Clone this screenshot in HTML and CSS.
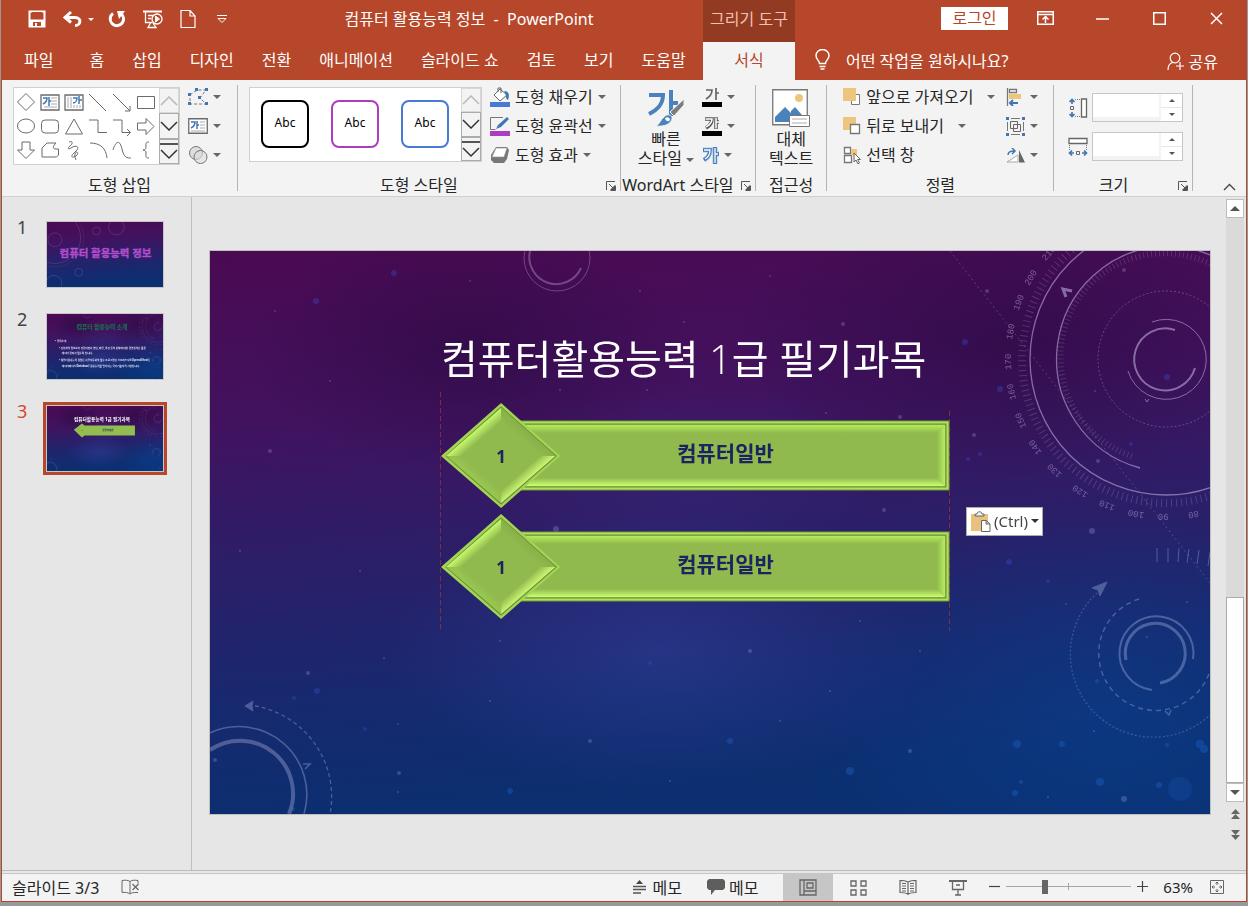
FILE: index.html
```html
<!DOCTYPE html>
<html lang="ko">
<head>
    <meta charset="UTF-8">
    <meta name="viewport" content="width=device-width, initial-scale=1.0">
    <title>컴퓨터 활용능력 정보 - PowerPoint</title>
    <link rel="stylesheet" href="styles.css">
</head>
<body>

<!-- shared drawings -->
<svg class="defs" aria-hidden="true">
    <defs>
        <linearGradient id="sky" x1="0" y1="0" x2="0.12" y2="1">
            <stop offset="0" stop-color="#4a0a52"/>
            <stop offset="0.3" stop-color="#42125f"/>
            <stop offset="0.55" stop-color="#2c1e68"/>
            <stop offset="0.8" stop-color="#17296f"/>
            <stop offset="1" stop-color="#0b2f70"/>
        </linearGradient>
        <radialGradient id="glow"><stop offset="0" stop-color="#3c50b4" stop-opacity="0.32"/><stop offset="1" stop-color="#3c50b4" stop-opacity="0"/></radialGradient>
        <radialGradient id="dark"><stop offset="0" stop-color="#200838" stop-opacity="0.45"/><stop offset="1" stop-color="#200838" stop-opacity="0"/></radialGradient>
        <radialGradient id="blue"><stop offset="0" stop-color="#0a3f8c" stop-opacity="0.6"/><stop offset="1" stop-color="#0a3f8c" stop-opacity="0"/></radialGradient>
        <linearGradient id="edgeTop" x1="0" y1="0" x2="0" y2="1"><stop offset="0" stop-color="#b4ec58"/><stop offset="1" stop-color="#90ba4e"/></linearGradient>
        <linearGradient id="edgeBottom" x1="0" y1="0" x2="0" y2="1"><stop offset="0" stop-color="#90ba4e"/><stop offset="1" stop-color="#ccff70"/></linearGradient>
        <linearGradient id="edgeRight" x1="0" y1="0" x2="1" y2="0"><stop offset="0" stop-color="#90ba4e"/><stop offset="1" stop-color="#b8ee60"/></linearGradient>
        <linearGradient id="facetNW" gradientUnits="userSpaceOnUse" x1="32" y1="29" x2="39" y2="37"><stop offset="0" stop-color="#c8fa6c"/><stop offset="1" stop-color="#90ba4e"/></linearGradient>
        <linearGradient id="facetSE" gradientUnits="userSpaceOnUse" x1="80" y1="69" x2="88" y2="78"><stop offset="0" stop-color="#90ba4e"/><stop offset="1" stop-color="#d6ff78"/></linearGradient>
        <linearGradient id="facetSW" gradientUnits="userSpaceOnUse" x1="32" y1="77" x2="39" y2="69"><stop offset="0" stop-color="#a6d852"/><stop offset="1" stop-color="#90ba4e"/></linearGradient>
        <linearGradient id="facetNE" gradientUnits="userSpaceOnUse" x1="81" y1="37" x2="88" y2="29"><stop offset="0" stop-color="#90ba4e"/><stop offset="1" stop-color="#82ac44"/></linearGradient>
    </defs>

    <symbol id="space" viewBox="0 0 1000 563" preserveAspectRatio="none">
        <rect width="1000" height="563" fill="url(#sky)"/>
        <ellipse cx="260" cy="100" rx="220" ry="120" fill="url(#dark)"/>
        <ellipse cx="800" cy="90" rx="280" ry="140" fill="url(#dark)"/>
        <ellipse cx="450" cy="400" rx="270" ry="140" fill="url(#glow)"/>
        <ellipse cx="480" cy="230" rx="200" ry="100" fill="url(#glow)" opacity="0.4"/>
        <ellipse cx="900" cy="470" rx="320" ry="210" fill="url(#blue)"/>
        <g fill="#3a4ed0" opacity="0.35">
            <circle cx="106" cy="50" r="3"/><circle cx="184" cy="22" r="3"/><circle cx="755" cy="91" r="3"/><circle cx="790" cy="138" r="3"/>
            <circle cx="107" cy="440" r="3"/><circle cx="84" cy="447" r="2"/><circle cx="155" cy="478" r="2"/><circle cx="770" cy="203" r="2"/>
            <circle cx="758" cy="208" r="2"/><circle cx="799" cy="311" r="3"/><circle cx="838" cy="330" r="2"/><circle cx="957" cy="126" r="3"/>
            <circle cx="921" cy="193" r="2"/><circle cx="504" cy="176" r="3"/><circle cx="440" cy="412" r="2"/>
        </g>
        <g fill="#1d62c8" opacity="0.4">
            <circle cx="807" cy="493" r="4"/><circle cx="852" cy="493" r="3"/><circle cx="890" cy="531" r="4"/><circle cx="805" cy="542" r="3"/>
            <circle cx="811" cy="531" r="2"/><circle cx="949" cy="534" r="3"/><circle cx="957" cy="494" r="2"/><circle cx="990" cy="493" r="4"/>
            <circle cx="994" cy="498" r="4"/><circle cx="887" cy="430" r="2"/><circle cx="640" cy="520" r="4"/><circle cx="520" cy="490" r="3"/>
            <circle cx="300" cy="540" r="3"/><circle cx="970" cy="538" r="12" opacity="0.5"/><circle cx="83" cy="558" r="2"/>
        </g>
        <g fill="#cfc6ff" opacity="0.22">
            <circle cx="474" cy="71" r="1"/><circle cx="633" cy="73" r="2"/><circle cx="777" cy="40" r="2"/><circle cx="914" cy="19" r="2"/>
            <circle cx="350" cy="139" r="1"/><circle cx="437" cy="139" r="1"/><circle cx="616" cy="162" r="1"/><circle cx="690" cy="166" r="2"/>
            <circle cx="764" cy="184" r="2"/><circle cx="885" cy="140" r="1"/><circle cx="888" cy="210" r="2"/><circle cx="882" cy="280" r="3"/>
            <circle cx="346" cy="278" r="3"/><circle cx="674" cy="259" r="2"/><circle cx="98" cy="422" r="2"/><circle cx="174" cy="407" r="1"/>
            <circle cx="188" cy="473" r="1"/><circle cx="189" cy="522" r="2"/><circle cx="188" cy="541" r="1"/><circle cx="5" cy="509" r="2"/>
            <circle cx="60" cy="200" r="2"/><circle cx="120" cy="130" r="1"/><circle cx="30" cy="300" r="1"/><circle cx="150" cy="320" r="1"/>
            <circle cx="280" cy="450" r="1"/><circle cx="380" cy="490" r="2"/><circle cx="460" cy="530" r="1"/><circle cx="570" cy="470" r="1"/>
            <circle cx="620" cy="440" r="1"/><circle cx="710" cy="400" r="1"/><circle cx="700" cy="500" r="2"/><circle cx="914" cy="548" r="3"/>
            <circle cx="856" cy="353" r="1"/><circle cx="884" cy="480" r="1"/><circle cx="937" cy="386" r="1"/><circle cx="977" cy="351" r="1"/>
            <circle cx="838" cy="546" r="1"/><circle cx="260" cy="30" r="1"/><circle cx="430" cy="40" r="1"/><circle cx="560" cy="25" r="1"/>
            <circle cx="290" cy="390" r="1"/><circle cx="650" cy="370" r="1"/><circle cx="540" cy="400" r="2"/><circle cx="65" cy="60" r="1"/>
        </g>

        <!-- top ring -->
        <g fill="none" stroke="#c8b4dc" opacity="0.35">
            <circle cx="347" cy="7" r="33"/>
            <path d="M320 0a27 27 0 0 0 51 17" stroke-width="2"/>
        </g>

        <!-- large gauge -->
        <g fill="none" stroke="#c9b9e6" opacity="0.55">
            <circle cx="956" cy="108" r="136" stroke-width="1.3"/>
            <path d="M930 217A113 113 0 0 1 956 -5A113 113 0 0 1 1000 4" stroke-width="1.3"/>
            <circle cx="956" cy="108" r="144" stroke-width="8" stroke-dasharray="1 4" opacity="0.4"/>
            <path d="M922 205A104 104 0 1 1 1040 47" stroke-width="6" stroke-dasharray="1 3" opacity="0.35"/>
            <circle cx="956" cy="108" r="68" stroke-dasharray="2 2" opacity="0.6"/>
            <path d="M965 79A31 31 0 1 0 985 117" stroke-width="2"/>
            <path d="M942 71A40 40 0 1 1 918 120"/>
            <path d="M740 0L1000 332" stroke-dasharray="2 3" opacity="0.5"/>
            <path d="M856 46l-3-8 9 2" stroke-width="3"/>
            <path d="M935 148l2 3 2-3"/>
        </g>
        <g class="gauge-numbers" fill="#c9b9e6" opacity="0.45" text-anchor="middle">
            <text x="956" y="-47" transform="rotate(170 956 108)">80</text>
            <text x="956" y="-47" transform="rotate(181 956 108)">90</text>
            <text x="956" y="-47" transform="rotate(191 956 108)">100</text>
            <text x="956" y="-47" transform="rotate(202 956 108)">110</text>
            <text x="956" y="-47" transform="rotate(213 956 108)">120</text>
            <text x="956" y="-47" transform="rotate(225 956 108)">130</text>
            <text x="956" y="-47" transform="rotate(236 956 108)">140</text>
            <text x="956" y="-47" transform="rotate(247 956 108)">150</text>
            <text x="956" y="-47" transform="rotate(258 956 108)">160</text>
            <text x="956" y="-47" transform="rotate(269 956 108)">170</text>
            <text x="956" y="-47" transform="rotate(280 956 108)">180</text>
            <text x="956" y="-47" transform="rotate(291 956 108)">190</text>
            <text x="956" y="-47" transform="rotate(301 956 108)">200</text>
            <text x="956" y="-47" transform="rotate(312 956 108)">210</text>
        </g>

        <!-- lower right rings -->
        <g fill="none" stroke="#9fb0dc" opacity="0.4">
            <path d="M947 297v14M958 297v14M969 297l-1 14M979 298l-2 14M989 299l-2 14M1000 301l-2 14"/>
            <path d="M942 439A37 37 0 1 1 983 408" stroke-width="2"/>
            <path d="M916 409A30 30 0 1 1 950 432" stroke-width="3"/>
            <path d="M929 348A57 57 0 1 0 1000 420" stroke-width="1.4" stroke-dasharray="5 4"/>
            <path d="M887 342A82 82 0 0 0 1000 464" stroke-width="1.4" stroke-dasharray="2 2" opacity="0.7"/>
            <path d="M882 337l15-6-7 14-2-6z" fill="#9fb0dc"/>
            <path d="M955 460l4 4 2-5" stroke-width="1.4"/>
        </g>

        <!-- lower left rings -->
        <g fill="none" stroke="#b0b0dc" opacity="0.38">
            <path d="M0 499A53 53 0 0 1 79 563" stroke-width="4"/>
            <path d="M0 482A68 68 0 0 1 94 563" stroke-width="1.6"/>
            <path d="M45 455A92 92 0 0 1 120 563" stroke-width="1.3" stroke-dasharray="4 3"/>
            <path d="M35 455l8-5-1 5 1 5z" fill="#b0b0dc"/>
            <path d="M93 513l7 0-5 5" stroke-width="1.5"/>
        </g>
    </symbol>

    <symbol id="arrow-bar" viewBox="0 0 508 106" preserveAspectRatio="none">
        <path d="M60 18H507V87H60z" fill="#b0e25c" stroke="#6f9c32"/>
        <path d="M60 21H504V84H60z" fill="#90ba4e" stroke="#6c8a3c"/>
        <path d="M60 22H503L495 30H60z" fill="url(#edgeTop)"/>
        <path d="M60 75H495L503 83H60z" fill="url(#edgeBottom)"/>
        <path d="M495 30L503 22V83L495 75z" fill="url(#edgeRight)"/>
        <path d="M60 0L119 53L60 105L0 53z" fill="#a2d652"/>
        <path d="M60 4L115 53L60 101L5 53z" fill="#90ba4e" stroke="#6c8a3c"/>
        <path d="M5 53L60 5V18L20 53z" fill="url(#facetNW)"/>
        <path d="M60 5L114 53H100L60 18z" fill="url(#facetNE)" opacity="0.6"/>
        <path d="M114 53L60 100V88L100 53z" fill="url(#facetSE)"/>
        <path d="M5 53H20L60 88V100z" fill="url(#facetSW)" opacity="0.5"/>
    </symbol>

    <symbol id="launcher" viewBox="0 0 10 10"><path d="M.5 9V.5H9M3 3l4 4M9.500 4.500v5h-5" fill="none" stroke="#555"/><path d="M9 4v5H4z" fill="#555"/></symbol>
    <symbol id="scroll-up" viewBox="0 0 18 10"><path d="M1 9l8-8 8 8" fill="none" stroke="#b8b8b8" stroke-width="1.5"/></symbol>
    <symbol id="scroll-down" viewBox="0 0 18 10"><path d="M1 1l8 8 8-8" fill="none" stroke="#333" stroke-width="1.5"/></symbol>
    <symbol id="scroll-more" viewBox="0 0 18 18"><path d="M0 2h18" stroke="#555" stroke-width="2"/><path d="M1 8l8 8 8-8" fill="none" stroke="#333" stroke-width="1.5"/></symbol>
</svg>

<div class="window">
    <header class="header">
        <div class="title-left">
            <nav class="quick-access" aria-label="빠른 실행 도구 모음">
                <button aria-label="저장"><svg width="18" height="18" viewBox="0 0 18 18"><path d="M1.500 1.500h15v15h-15z" fill="none" stroke="#fff" stroke-width="2"/><path d="M4 1h10v8H4z" fill="#b7472a"/><path d="M1 1h16v1H1zM1 9.500h16V17H1z" fill="#fff"/><path d="M5 12h8v4H5z" fill="#b7472a"/><path d="M7 13h2v3H7z" fill="#fff"/></svg></button>
                <button class="undo" aria-label="실행 취소"><svg width="19" height="18" viewBox="0 0 19 18"><path d="M8 2L2 7.500l6 5M2.500 7.500H12c7 0 6 8 0 8" fill="none" stroke="#fff" stroke-width="3"/></svg><span class="caret light"></span></button>
                <button aria-label="다시 실행"><svg width="18" height="18" viewBox="0 0 18 18"><path d="M5 3.500A6.700 6.700 0 1 0 12.500 3.300" fill="none" stroke="#fff" stroke-width="3"/><path d="M9 1h8l-6 8z" fill="#fff"/></svg></button>
                <button aria-label="처음부터 시작"><svg width="20" height="19" viewBox="0 0 20 19" fill="none" stroke="#fff"><path d="M0 1.500h19" stroke-width="2"/><path d="M2.500 2v10.500h7M5 5.500h6M5 8.500h3M8 12l-3 5.500h8L10 13" stroke-width="1.300"/><circle cx="14" cy="9" r="5" fill="#b7472a" stroke-width="1.300"/><path d="M12.500 6l4 3-4 3z" fill="#fff"/></svg></button>
                <button aria-label="새로 만들기"><svg width="16" height="18" viewBox="0 0 16 18"><path d="M1 .5h9l5 5.500v11.500H1zM10 .5V6h5" fill="none" stroke="#fff" stroke-width="1.200"/></svg></button>
                <button class="customize" aria-label="빠른 실행 도구 모음 사용자 지정"><svg width="10" height="8" viewBox="0 0 10 8"><path d="M0 .5h10M1 3.500h8l-4 4z" fill="none" stroke="#fff"/></svg></button>
            </nav>
            <h1 class="doc-title">컴퓨터 활용능력 정보 &nbsp;-&nbsp; PowerPoint</h1>
        </div>
        <div class="context-label">그리기 도구</div>
        <div class="title-right">
            <button class="login">로그인</button>
            <button class="win-button" aria-label="리본 메뉴 표시 옵션"><svg width="17" height="14" viewBox="0 0 17 14"><path d="M.75.75h15.500v12.500H.75zM1 3.500h15" fill="none" stroke="#fff" stroke-width="1.500"/><path d="M8.500 12V6M5.500 8.500l3-3 3 3" fill="none" stroke="#fff" stroke-width="1.500"/></svg></button>
            <button class="win-button" aria-label="최소화"><svg width="13" height="13" viewBox="0 0 13 13"><path d="M0 7h13" stroke="#fff" stroke-width="1.500"/></svg></button>
            <button class="win-button" aria-label="최대화"><svg width="13" height="13" viewBox="0 0 13 13"><path d="M.75.75h11.500v11.500H.75z" fill="none" stroke="#fff" stroke-width="1.500"/></svg></button>
            <button class="win-button" aria-label="닫기"><svg width="13" height="13" viewBox="0 0 13 13"><path d="M1 1l11 11M12 1L1 12" stroke="#fff" stroke-width="1.500"/></svg></button>
        </div>

        <nav class="tabs" aria-label="리본 탭">
            <button class="file-tab">파일</button>
            <button>홈</button>
            <button>삽입</button>
            <button>디자인</button>
            <button>전환</button>
            <button>애니메이션</button>
            <button>슬라이드 쇼</button>
            <button>검토</button>
            <button>보기</button>
            <button>도움말</button>
        </nav>
        <button class="format-tab">서식</button>
        <div class="tabs-right">
            <button class="tell-me"><svg width="15" height="21" viewBox="0 0 15 21"><path d="M4.500 14.500c0-3-3.500-4-3.500-8a6.500 6 0 0 1 13 0c0 4-3.500 5-3.500 8zM4.500 17.500h6M5.500 20h4" fill="none" stroke="#fff" stroke-width="1.500"/></svg>어떤 작업을 원하시나요?</button>
            <button class="share"><svg width="18" height="19" viewBox="0 0 18 19"><circle cx="8" cy="6" r="4.800" fill="none" stroke="#fff" stroke-width="1.200"/><path d="M1 18c0-4 2-7 5-7.500M13 10v8M9 14h8" fill="none" stroke="#fff" stroke-width="1.200"/></svg>공유</button>
        </div>
    </header>

    <div class="ribbon">
        <section class="group insert-group">
            <div class="group-body">
                <div class="gallery">
                    <div class="shape-grid">
                        <button aria-label="다이아몬드"><svg viewBox="0 0 20 20"><path d="M10 1.500l8.500 8.500-8.500 8.500L1.500 10z"/></svg></button>
                        <button aria-label="텍스트 상자"><svg viewBox="0 0 20 20"><path d="M1 3h18v15H1z" stroke-width="1.300"/><path d="M11 6h6M11 9h6M11 12h6M4 15h13" stroke="#aaa"/><path d="M3 6h4c0 3-2 5-4 6M9 5v9M9 9h2" stroke="#3f77b5" stroke-width="1.500"/></svg></button>
                        <button aria-label="세로 텍스트 상자"><svg viewBox="0 0 20 20"><path d="M1 3h18v15H1z" stroke-width="1.300"/><path d="M4 5v11M7 5v11M10 13v3M13 13v3M16 13v3" stroke="#aaa"/><path d="M9 6h4c0 3-2 5-4 5M15 4v8M15 8h3" stroke="#3f77b5" stroke-width="1.500"/></svg></button>
                        <button aria-label="선"><svg viewBox="0 0 20 20"><path d="M1 2l17 17"/></svg></button>
                        <button aria-label="화살표"><svg viewBox="0 0 20 20"><path d="M1 2l17 17M18 14v5h-5"/></svg></button>
                        <button aria-label="직사각형"><svg viewBox="0 0 20 20"><path d="M1.500 4.500h17v12h-17z"/></svg></button>
                        <button aria-label="타원"><svg viewBox="0 0 20 20"><ellipse cx="10" cy="10" rx="8.500" ry="7"/></svg></button>
                        <button aria-label="둥근 직사각형"><svg viewBox="0 0 20 20"><rect x="1.500" y="4" width="17" height="13" rx="3.500"/></svg></button>
                        <button aria-label="삼각형"><svg viewBox="0 0 20 20"><path d="M10 3l8.500 15h-17z"/></svg></button>
                        <button aria-label="꺾인 연결선"><svg viewBox="0 0 20 20"><path d="M1 4h9v12.500h9"/></svg></button>
                        <button aria-label="꺾인 화살표 연결선"><svg viewBox="0 0 20 20"><path d="M1 4h9v12.500h8M15 13l3.500 3.500L15 20"/></svg></button>
                        <button aria-label="오른쪽 화살표"><svg viewBox="0 0 20 20"><path d="M1.500 7H10V2.500l8 8-8 8V14H1.500z"/></svg></button>
                        <button aria-label="아래쪽 화살표"><svg viewBox="0 0 20 20"><path d="M6 2h8v8h4.500L10 18.500 1.500 10H6z"/></svg></button>
                        <button aria-label="자유형"><svg viewBox="0 0 20 20"><path d="M2 17V8l5-5h9c-3 3-4 6 0 6h2.500v6l-2 2z"/></svg></button>
                        <button aria-label="자유 곡선"><svg viewBox="0 0 20 20"><path d="M5 2c5-2 3 3 1 4-3 2-2 4 1 2 4-3 9-2 6 2l-4 4c-3 3 0 4 3 2 4-3 0-6-1-2-1 3 1 5 1 6"/></svg></button>
                        <button aria-label="원호"><svg viewBox="0 0 20 20"><path d="M2 3c10 0 16 5 17 15"/></svg></button>
                        <button aria-label="곡선"><svg viewBox="0 0 20 20"><path d="M1 10C4 0 8 0 10 9s5 9 9 9"/></svg></button>
                        <button aria-label="왼쪽 중괄호"><svg viewBox="0 0 20 20"><path d="M13 2c-4 0-3 2-3 5 0 2-1 3-3 3 2 0 3 1 3 3 0 3-1 5 3 5"/></svg></button>
                    </div>
                    <div class="gallery-scroll">
                        <button class="off" aria-label="위로"><svg width="18" height="10"><use href="#scroll-up"/></svg></button>
                        <button aria-label="아래로"><svg width="18" height="10"><use href="#scroll-down"/></svg></button>
                        <button aria-label="자세히"><svg width="18" height="18"><use href="#scroll-more"/></svg></button>
                    </div>
                </div>
                <div class="rows">
                    <button class="tool" aria-label="도형 편집"><svg width="20" height="18" viewBox="0 0 20 18"><path d="M2 7l7-5h9l-6 8 6 6H2z" fill="none" stroke="#777" stroke-dasharray="3 2"/><path d="M0 5h3v3H0zM7 0h3v3H7zM17 0h3v3h-3zM10 8h3v3h-3zM0 14h3v3H0zM17 14h3v3h-3z" fill="#3f77b5"/></svg><span class="caret"></span></button>
                    <button class="tool" aria-label="텍스트 상자 그리기"><svg width="20" height="16" viewBox="0 0 20 16"><path d="M.75.75h18.500v14.500H.75z" fill="#fff" stroke="#6b6b6b" stroke-width="1.300"/><path d="M12 4h5M12 7h5M12 10h5M3 13h14" stroke="#aaa"/><path d="M3 4h4c0 3-2 5-4 6M9 3v8M9 7h2" fill="none" stroke="#3f77b5" stroke-width="1.500"/></svg><span class="caret"></span></button>
                    <button class="tool" aria-label="도형 병합"><svg width="20" height="20" viewBox="0 0 20 20"><circle cx="8" cy="8" r="6.500" fill="#ddd" stroke="#777"/><circle cx="12.500" cy="12" r="6.500" fill="#ddd" fill-opacity=".6" stroke="#777"/></svg><span class="caret"></span></button>
                </div>
            </div>
            <div class="group-foot"><h2>도형 삽입</h2></div>
        </section>

        <section class="group style-group">
            <div class="group-body">
                <div class="gallery">
                    <div class="swatches">
                        <button class="swatch black">Abc</button>
                        <button class="swatch purple">Abc</button>
                        <button class="swatch blue">Abc</button>
                    </div>
                    <div class="gallery-scroll">
                        <button class="off" aria-label="위로"><svg width="18" height="10"><use href="#scroll-up"/></svg></button>
                        <button aria-label="아래로"><svg width="18" height="10"><use href="#scroll-down"/></svg></button>
                        <button aria-label="자세히"><svg width="18" height="18"><use href="#scroll-more"/></svg></button>
                    </div>
                </div>
                <div class="rows">
                    <button class="tool"><svg width="20" height="20" viewBox="0 0 20 20"><path d="M10 2l7 6-7 6-6-6zM8 5V1h3v5" fill="#fff" stroke="#666"/><path d="M14 4c5 0 6 4 4 9-3-1-1-5-4-9z" fill="#3f77b5"/><path d="M0 15h20v5H0z" fill="#487ad5"/></svg>도형 채우기<span class="caret"></span></button>
                    <button class="tool"><svg width="20" height="20" viewBox="0 0 20 20"><path d="M13 1.500H.5v12h5" fill="none" stroke="#777"/><path d="M6 13l2-4 9-8 2 2-8 8z" fill="#3f77b5"/><path d="M0 15h20v5H0z" fill="#ae3cc3"/></svg>도형 윤곽선<span class="caret"></span></button>
                    <button class="tool"><svg width="20" height="18" viewBox="0 0 20 18"><path d="M6 1h11l2 3-2 9-3 4H4l-3-3V9z" fill="#777"/><path d="M6 2h11l-3 9H2z" fill="#fff" stroke="#999" stroke-width=".7"/></svg>도형 효과<span class="caret"></span></button>
                </div>
            </div>
            <div class="group-foot"><h2>도형 스타일</h2><button class="launcher" aria-label="도형 서식"><svg width="10" height="10"><use href="#launcher"/></svg></button></div>
        </section>

        <section class="group wordart-group">
            <div class="group-body">
                <button class="big-tool">
                    <svg width="38" height="38" viewBox="0 0 38 38"><path d="M2 6h14c0 10-6 15-14 19M24 1v26M24 14h7" fill="none" stroke="#4a82bd" stroke-width="4"/><path d="M37 10v6L27 27l-4-4z" fill="#7d7d7d" stroke="#f3f3f3"/><path d="M17 28c3-4 9-2 8 2-1 5-8 8-16 7 4-2 4-6 8-9z" fill="#4a82bd" stroke="#f3f3f3"/><path d="M18 29c3-2 5 0 5 2-2 3-5 0-5-2z" fill="#fff"/></svg>
                    <span>빠른<br>스타일 <span class="caret"></span></span>
                </button>
                <div class="rows">
                    <button class="tool" aria-label="텍스트 채우기"><svg width="20" height="20" viewBox="0 0 20 20"><path d="M4 3h6c0 5-3 7-6 9M14 1v12M14 6h3" fill="none" stroke="#666" stroke-width="1.700"/><path d="M0 15h20v5H0z"/></svg><span class="caret"></span></button>
                    <button class="tool" aria-label="텍스트 윤곽선"><svg width="20" height="20" viewBox="0 0 20 20"><path d="M3 3h7c0 5-3 7-6 9M14 1v12M14 6h3" fill="none" stroke="#555" stroke-width="3.500"/><path d="M3.500 3H10c0 5-3 6-6 8M14 1.500v11M14 6h3" fill="none" stroke="#fff" stroke-width="1.500"/><path d="M0 15h20v5H0z"/></svg><span class="caret"></span></button>
                    <button class="tool" aria-label="텍스트 효과"><svg width="17" height="19" viewBox="0 0 17 19"><path d="M1 4h7c0 6-3 8-6 10M13 1v17M13 8h4" fill="none" stroke="#a9c9ea" stroke-width="5"/><path d="M1 4h7c0 6-3 8-6 10M13 1v17M13 8h4" fill="none" stroke="#3f77b5" stroke-width="3.500"/><path d="M2 4h6c0 6-3 8-5 9M13 2v15M13 8h3" fill="none" stroke="#fff" stroke-width="1.300"/></svg><span class="caret"></span></button>
                </div>
            </div>
            <div class="group-foot"><h2>WordArt 스타일</h2><button class="launcher" aria-label="텍스트 효과 서식"><svg width="10" height="10"><use href="#launcher"/></svg></button></div>
        </section>

        <section class="group alt-group">
            <div class="group-body">
                <button class="big-tool">
                    <svg width="38" height="38" viewBox="0 0 38 38"><path d="M.75.75h34.500v35H.75z" fill="#fff" stroke="#777" stroke-width="1.300"/><circle cx="27" cy="9" r="4" fill="#edc57d"/><path d="M3 33V28l10-10 10 10v5zM19 22l4-4 7 8v7H19z" fill="#4a82bd"/><path d="M17.500 26.500h20v11h-20z" fill="#fff" stroke="#777"/><path d="M20 30h15M20 34h15" stroke="#aaa"/></svg>
                    <span>대체<br>텍스트</span>
                </button>
            </div>
            <div class="group-foot"><h2>접근성</h2></div>
        </section>

        <section class="group arrange-group">
            <div class="group-body">
                <div class="rows wide">
                    <button class="tool"><svg width="18" height="18" viewBox="0 0 18 18"><path d="M8.500 6.500h8v10h-8z" fill="#fff" stroke="#777"/><path d="M0 0h13v13H0z" fill="#edc57d"/></svg>앞으로 가져오기<span class="caret"></span></button>
                    <button class="tool"><svg width="18" height="18" viewBox="0 0 18 18"><path d="M0 0h13v13H0z" fill="#edc57d"/><path d="M7.500 7.500h9v9h-9z" fill="#fff" stroke="#777" stroke-width="1.300"/></svg>뒤로 보내기<span class="caret"></span></button>
                    <button class="tool"><svg width="18" height="18" viewBox="0 0 18 18"><path d="M1.500 1.500h6v6h-6zM1.500 9.500h7v7h-7z" fill="#fff" stroke="#777" stroke-width="1.300"/><path d="M8 3h6v6H8z" fill="#edc57d"/><path d="M11 7v9l2-2 2 4 1.500-1-2-3.500h3z" fill="#fff" stroke="#666"/></svg>선택 창</button>
                </div>
                <div class="rows">
                    <button class="tool" aria-label="맞춤"><svg width="19" height="18" viewBox="0 0 19 18"><path d="M1.500 0v18M3.500 1.500h7v3h-7z" fill="#fff" stroke="#777" stroke-width="1.300"/><path d="M3 6h12v5H3z" fill="#edc57d"/><path d="M4 15h8M7 12l-3 3 3 3" fill="none" stroke="#3f77b5" stroke-width="2"/></svg><span class="caret"></span></button>
                    <button class="tool" aria-label="그룹화"><svg width="19" height="19" viewBox="0 0 19 19"><path d="M1.500 5v9M17.500 5v9M5 1.500h9M5 17.500h9" fill="none" stroke="#777"/><path d="M4.500 4.500h7v7h-7zM7.500 7.500h7v7h-7z" fill="none" stroke="#666"/><path d="M0 0h3v3H0zM16 0h3v3h-3zM0 16h3v3H0zM16 16h3v3h-3z" fill="#3f77b5"/></svg><span class="caret"></span></button>
                    <button class="tool" aria-label="회전"><svg width="19" height="15" viewBox="0 0 19 15"><path d="M12 7v7H1z" fill="#fff" stroke="#aaa"/><path d="M13 2l6 12.500h-6z" fill="#666"/><path d="M2 7c0-3 2-4 6-4M6 0l3 3-3 3" fill="none" stroke="#3f77b5" stroke-width="1.500"/></svg><span class="caret"></span></button>
                </div>
            </div>
            <div class="group-foot"><h2>정렬</h2></div>
        </section>

        <section class="group size-group">
            <div class="group-body fields">
                <div class="field">
                    <label for="shape-height" aria-label="도형 높이"><svg width="20" height="20" viewBox="0 0 20 20"><path d="M13.500 1h5v18h-5z" fill="#fff" stroke="#666" stroke-width="1.300"/><path d="M7 1.500h5M7 18.500h5" stroke="#777" stroke-dasharray="1 1"/><path d="M4 1v5M1.500 4L4 1.500 6.500 4M4 19v-5M1.500 16L4 18.500 6.500 16" fill="none" stroke="#3f77b5" stroke-width="1.700"/><path d="M2.500 8.500h3v3h-3z" fill="none" stroke="#666"/></svg></label>
                    <div class="spin"><input id="shape-height" type="text"><div class="steps"><button aria-label="높이 늘리기"><span class="up"></span></button><button aria-label="높이 줄이기"><span class="down"></span></button></div></div>
                </div>
                <div class="field">
                    <label for="shape-width" aria-label="도형 너비"><svg width="20" height="20" viewBox="0 0 20 20"><path d="M1 1.500h18v5H1z" fill="#fff" stroke="#666" stroke-width="1.300"/><path d="M1.500 8v5M18.500 8v5" stroke="#777" stroke-dasharray="1 1"/><path d="M1 16h5M4 13.500L1.500 16 4 18.500M19 16h-5M16 13.500l2.500 2.500-2.500 2.500" fill="none" stroke="#3f77b5" stroke-width="1.700"/><path d="M8.500 14.500h3v3h-3z" fill="none" stroke="#666"/></svg></label>
                    <div class="spin"><input id="shape-width" type="text"><div class="steps"><button aria-label="너비 늘리기"><span class="up"></span></button><button aria-label="너비 줄이기"><span class="down"></span></button></div></div>
                </div>
            </div>
            <div class="group-foot"><h2>크기</h2><button class="launcher" aria-label="크기 및 위치"><svg width="10" height="10"><use href="#launcher"/></svg></button></div>
        </section>

        <button class="collapse" aria-label="리본 메뉴 축소"><svg width="13" height="8" viewBox="0 0 13 8"><path d="M1 7l5.500-5.500L12 7" fill="none" stroke="#444" stroke-width="1.300"/></svg></button>
    </div>

    <main class="workspace">
        <ol class="thumbs">
            <li>
                <span class="thumb-number">1</span>
                <svg class="thumb" viewBox="0 0 1000 563" preserveAspectRatio="none">
                    <rect width="1000" height="563" fill="url(#sky)"/>
                    <g fill="none" stroke="#c0b0e0" opacity="0.25" stroke-width="6"><circle cx="68" cy="154" r="60"/><circle cx="68" cy="137" r="222"/><circle cx="68" cy="137" r="250" stroke-dasharray="9 9"/><circle cx="598" cy="43" r="68"/><circle cx="427" cy="77" r="34"/><circle cx="274" cy="436" r="34"/><circle cx="60" cy="530" r="68"/></g>
                    <text class="thumb-cover" x="504" y="300">컴퓨터 활용능력 정보</text>
                </svg>
            </li>
            <li>
                <span class="thumb-number">2</span>
                <svg class="thumb" viewBox="0 0 1000 563" preserveAspectRatio="none">
                    <use href="#space" width="1000" height="563"/>
                    <text class="thumb-green" x="474" y="126">컴퓨터 활용능력 소개</text>
                    <g class="thumb-body">
                        <text x="66" y="240">•&#160;&#160;종목소개</text>
                        <text x="104" y="299">•&#160;산업계의 정보화가 진전되면서 영업, 재무, 생산 등의 분야에 대한 경영분석은 물론</text>
                        <text x="128" y="347">데이터 관리가 필수적 입니다.</text>
                        <text x="104" y="409">•&#160;컴퓨터활용능력 검정은 사무자동화의 필수 프로그램인 스프레드시트(SpreadSheet),</text>
                        <text x="128" y="456">데이터베이스(Database) 활용능력을 평가하는 국가기술자격 시험입니다.</text>
                    </g>
                </svg>
            </li>
            <li class="current">
                <span class="thumb-number">3</span>
                <svg class="thumb" viewBox="0 0 1000 563" preserveAspectRatio="none">
                    <use href="#space" width="1000" height="563"/>
                    <text class="thumb-title" x="474" y="126">컴퓨터활용능력 1급 필기과목</text>
                    <path d="M231 205l70-53 24 17h433v86H325l-24 17z" fill="#93bd4f"/>
                    <text class="thumb-bar" x="524" y="218">컴퓨터일반</text>
                    <text class="thumb-bar" x="301" y="218">1</text>
                </svg>
            </li>
        </ol>

        <div class="editor">
            <div class="slide">
                <svg class="slide-back" viewBox="0 0 1000 563" preserveAspectRatio="none"><use href="#space" width="1000" height="563"/><path d="M230.500 141V380M739.500 160V380" stroke="#a8342a" stroke-dasharray="5 3" opacity=".7"/></svg>
                <div class="slide-content">
                    <h2 class="slide-title">컴퓨터활용능력 <span class="thin">1</span>급 필기과목</h2>
                    <div class="bar-row">
                        <svg class="bar-shape" viewBox="0 0 508 106" preserveAspectRatio="none"><use href="#arrow-bar" width="508" height="106"/></svg>
                        <span class="bar-number">1</span>
                        <span class="bar-text">컴퓨터일반</span>
                    </div>
                    <div class="bar-row">
                        <svg class="bar-shape" viewBox="0 0 508 106" preserveAspectRatio="none"><use href="#arrow-bar" width="508" height="106"/></svg>
                        <span class="bar-number">1</span>
                        <span class="bar-text">컴퓨터일반</span>
                    </div>
                </div>
                <button class="paste-options"><svg width="20" height="21" viewBox="0 0 20 21"><path d="M0 3h17v17H0z" fill="#e9c17e"/><path d="M4 5V3h2c0-3 5-3 5 0h2v2z" fill="#f3f3f3" stroke="#666"/><path d="M10.500 9.500h5l3.500 3.500v7.500h-8.500zM15 9.500V13h4" fill="#fff" stroke="#666"/></svg>(Ctrl)<span class="caret dark"></span></button>
            </div>
        </div>

        <div class="scrollbar">
            <button class="scroll-button" aria-label="위로 스크롤"><span class="up"></span></button>
            <div class="track"><div class="scroll-thumb"></div></div>
            <button class="scroll-button" aria-label="아래로 스크롤"><span class="down"></span></button>
            <button class="page-button" aria-label="이전 슬라이드"><svg width="9" height="11" viewBox="0 0 9 11"><path d="M4.500 0L9 5H0zM4.500 5L9 10H0z" fill="#666"/></svg></button>
            <button class="page-button" aria-label="다음 슬라이드"><svg width="9" height="11" viewBox="0 0 9 11"><path d="M4.500 6L9 1H0zM4.500 11L9 6H0z" fill="#666"/></svg></button>
        </div>
    </main>

    <footer class="status">
        <span class="slide-count">슬라이드 3/3</span>
        <button class="spell" aria-label="맞춤법 검사"><svg width="19" height="16" viewBox="0 0 19 16"><path d="M9 2.500v12M9 2.500C7 1 4 1 1 1.500v12c3-.5 6 0 8 1.500 2-1.500 3-1.500 7-1.500h1M9 2.500C11 1 13 1 17 1.500v3" fill="none" stroke="#666"/><path d="M11.500 5l6 6M17.500 5l-6 6" stroke="#666" stroke-width="1.300"/></svg></button>
        <button class="note"><svg width="13" height="14" viewBox="0 0 13 14"><path d="M6.500 0L10 4H3z" fill="#444"/><path d="M0 6.500h13M0 9.500h13M0 13h8" stroke="#555" stroke-width="1.300"/></svg>메모</button>
        <button class="comment"><svg width="18" height="16" viewBox="0 0 18 16"><path d="M2 0h14l2 2v7l-2 2H8l-4 5v-5H2L0 9V2z" fill="#5e5e5e"/></svg>메모</button>
        <div class="views">
            <button class="active" aria-label="기본"><svg width="18" height="17" viewBox="0 0 18 17"><path d="M1 1h16v15H1zM5 1v15M5 12h12M8 4h6v5H8z" fill="none" stroke="#666" stroke-width="1.300"/></svg></button>
            <button aria-label="여러 슬라이드"><svg width="17" height="16" viewBox="0 0 17 16"><path d="M1 1h5v5H1zM11 1h5v5h-5zM1 10h5v5H1zM11 10h5v5h-5z" fill="none" stroke="#666" stroke-width="1.300"/></svg></button>
            <button aria-label="읽기용 보기"><svg width="18" height="15" viewBox="0 0 18 15"><path d="M9 2C7 1 4 .5 1 .5v12c3 0 6 .5 8 1.500 2-1 5-1.500 8-1.500V.5C14 .5 11 1 9 2zM9 2v13M3 3.500h4M3 6h4M3 8.500h4M3 11h4M11 3.500h4M11 6h4M11 8.500h4M11 11h4" fill="none" stroke="#666" stroke-width="1.200"/></svg></button>
            <button aria-label="슬라이드 쇼"><svg width="18" height="16" viewBox="0 0 18 16"><path d="M0 1h18" stroke="#666" stroke-width="2"/><path d="M3.500 2v7.500h11V2M7 5h4M9 10v5M6 15h6" fill="none" stroke="#666" stroke-width="1.300"/></svg></button>
        </div>
        <button class="zoom-step" aria-label="축소"><svg width="11" height="11" viewBox="0 0 11 11"><path d="M0 5.500h11" stroke="#444" stroke-width="1.200"/></svg></button>
        <input class="zoom" type="range" min="0" max="100" value="30" aria-label="확대/축소">
        <button class="zoom-step" aria-label="확대"><svg width="11" height="11" viewBox="0 0 11 11"><path d="M0 5.500h11M5.500 0v11" stroke="#444" stroke-width="1.200"/></svg></button>
        <button class="percent">63%</button>
        <button class="fit" aria-label="창에 맞춤"><svg width="14" height="14" viewBox="0 0 14 14"><path d="M.5.5h13v13H.5zM7 2v3M7 9v3M2 7h3M9 7h3M5.500 3.500L7 2l1.500 1.500M5.500 10.500L7 12l1.500-1.500M3.500 5.500L2 7l1.500 1.500M10.500 5.500L12 7l-1.500 1.500" fill="none" stroke="#666"/></svg></button>
    </footer>
</div>

</body>
</html>
```
FILE: styles.css
```css
* {
    box-sizing: border-box;
}
body {
    margin: 0;
    height: 100vh;
    padding: 0 1px 4px;
    background-color: #999999;
    color: #262626;
    font-family: "Noto Sans", "Noto Sans CJK KR", sans-serif;
    font-size: 16px;
    overflow: hidden;
}
button {
    border: none;
    padding: 0;
    background: none;
    color: inherit;
    font: inherit;
    white-space: nowrap;
}
svg {
    display: block;
    flex: none;
}
h1, h2 {
    margin: 0;
    font-size: 16px;
    font-weight: 400;
}
.defs {
    position: absolute;
    width: 0;
    height: 0;
}
.window {
    height: 100%;
    display: flex;
    flex-direction: column;
    border: 1px solid #b7472a;
    border-top: none;
    background-color: #e6e6e6;
}
.caret {
    display: inline-block;
    border: 4px solid transparent;
    border-top-color: #666666;
    border-bottom: none;
    vertical-align: middle;
}
.caret.light {
    border-width: 3px;
    border-top-color: #ffffff;
    border-bottom: none;
}
.caret.dark {
    border-top-color: #333333;
}
.up, .down {
    border: 3px solid transparent;
}
.up {
    border-bottom-color: #555555;
    border-top: none;
}
.down {
    border-top-color: #555555;
    border-bottom: none;
}

/* Header */
.header {
    display: grid;
    grid-template-columns: 701px 92px 1fr;
    grid-template-rows: 42px 38px;
    background-color: #b7472a;
    color: #ffffff;
}
.title-left {
    display: flex;
    align-items: center;
    padding-bottom: 4px;
}
.quick-access {
    display: flex;
    align-items: center;
    gap: 17px;
    padding-left: 26px;
}
.undo {
    display: flex;
    align-items: center;
    gap: 6px;
}
.undo .caret {
    margin-right: -3px;
}
.customize {
    padding-left: 4px;
}
.doc-title {
    flex: 1;
    padding: 0 0 2px 8px;
    text-align: center;
    font-size: 16px;
}
.context-label {
    background-color: #933a22;
    color: #f5c1b0;
    text-align: center;
    line-height: 38px;
    white-space: nowrap;
}
.title-right {
    display: flex;
    align-items: center;
    justify-content: flex-end;
    padding: 0 1px 6px 0;
}
.login {
    width: 67px;
    height: 23px;
    margin-right: 9px;
    background-color: #ffffff;
    color: #b7472a;
    line-height: 20px;
}
.win-button {
    width: 57px;
    height: 36px;
    display: flex;
    align-items: center;
    justify-content: center;
}
.tabs {
    display: flex;
}
.tabs button {
    padding: 0 14px 4px;
}
.tabs .file-tab {
    padding-left: 22px;
    margin-right: 8px;
}
.format-tab {
    padding-bottom: 4px;
    background-color: #f3f3f3;
    color: #b7472a;
}
.tabs-right {
    display: flex;
    justify-content: space-between;
    padding: 0 28px 0 20px;
}
.tell-me, .share {
    display: flex;
    align-items: center;
    gap: 16px;
    padding-bottom: 3px;
}
.share {
    gap: 4px;
    padding-bottom: 0;
}

/* Ribbon */
.ribbon {
    display: flex;
    height: 117px;
    padding: 5px 0;
    background-color: #f3f3f3;
    border-bottom: 1px solid #cfcfcf;
}
.group {
    display: flex;
    flex-direction: column;
    border-right: 1px solid #b4b4b4;
}
.group-body {
    flex: 1;
    display: flex;
    align-items: flex-start;
    gap: 8px;
}
.group-foot {
    display: flex;
    height: 16px;
}
.group-foot h2 {
    flex: 1;
    text-align: center;
    line-height: 20px;
    white-space: nowrap;
}
.launcher {
    padding: 6px 4px 0 6px;
}
.insert-group .group-body {
    padding: 0 16px 0 11px;
}
.style-group .group-body {
    padding: 0 14px 0 11px;
}
.wordart-group .group-body {
    padding: 0 20px 0 17px;
}
.alt-group .group-body {
    padding: 0 13px;
}
.arrange-group .group-body {
    padding: 0 15px 0 16px;
    gap: 11px;
}
.gallery {
    display: flex;
    margin-top: 2px;
    background-color: #ffffff;
    border: 1px solid #d0d0d0;
}
.shape-grid {
    display: grid;
    grid-template-columns: repeat(6, 24px);
    grid-template-rows: repeat(3, 24px);
    padding: 2px 1px 2px 0;
}
.shape-grid button {
    display: flex;
    align-items: center;
    justify-content: center;
}
.shape-grid svg {
    width: 20px;
    height: 20px;
    fill: none;
    stroke: #6b6b6b;
}
.gallery-scroll {
    width: 20px;
    display: flex;
    flex-direction: column;
}
.gallery-scroll button {
    flex: 1;
    display: flex;
    align-items: center;
    justify-content: center;
    background-color: #f3f3f3;
    border: 1px solid #ababab;
}
.gallery-scroll .off {
    border-color: #d8d8d8;
}
.swatches {
    display: flex;
    gap: 22px;
    padding: 12px 12px 13px 11px;
}
.swatch {
    width: 48px;
    height: 48px;
    padding-bottom: 3px;
    border: 2px solid #000000;
    border-radius: 8px;
    color: #000000;
    font-size: 12px;
}
.swatch.purple {
    border-color: #ae3cc3;
}
.swatch.blue {
    border-color: #487ad5;
}
.rows {
    display: flex;
    flex-direction: column;
    gap: 5px;
}
.tool {
    display: flex;
    align-items: center;
    gap: 5px;
    height: 24px;
    line-height: 24px;
}
.wide .caret {
    margin-left: 9px;
}
.big-tool {
    display: flex;
    flex-direction: column;
    align-items: center;
    min-width: 44px;
    padding-top: 4px;
    line-height: 19px;
}
.big-tool svg {
    margin-bottom: 3px;
}
.size-group .fields {
    flex-direction: column;
    gap: 10px;
    padding: 8px 9px 0 14px;
}
.field {
    display: flex;
    align-items: center;
    gap: 4px;
}
.spin {
    display: flex;
    width: 91px;
    height: 29px;
    background-color: #ffffff;
    border: 1px solid #c6c6c6;
}
.spin input {
    flex: 1;
    min-width: 0;
    border: 1px solid #f3f3f3;
    border-width: 0 2px 4px 0;
    background-color: #ffffff;
    font: inherit;
}
.steps {
    width: 21px;
    display: flex;
    flex-direction: column;
}
.steps button {
    flex: 1;
    display: flex;
    align-items: center;
    justify-content: center;
}
.steps button + button {
    border-top: 1px solid #e6e6e6;
}
.collapse {
    align-self: flex-end;
    margin: 0 10px 0 auto;
}

/* Workspace */
.workspace {
    flex: 1;
    min-height: 0;
    display: flex;
    border-bottom: 1px solid #bdbdbd;
}
.thumbs {
    width: 190px;
    margin: 0;
    padding: 21px 0 0 15px;
    list-style: none;
    border-right: 1px solid #bfbfbf;
}
.thumbs li {
    display: flex;
    height: 92px;
}
.thumb-number {
    width: 26px;
    font-size: 18px;
    line-height: 19px;
    color: #444444;
}
.thumb {
    width: 118px;
    height: 67px;
    margin: 3px;
    border: 1px solid #c6c6c6;
}
.current .thumb-number {
    color: #d04727;
}
.current .thumb {
    outline: 3px solid #b7472a;
}
.thumb text {
    text-anchor: middle;
    font-weight: 700;
}
.thumb .thumb-cover {
    font-size: 90px;
    fill: #b44ccc;
    stroke: #b44ccc;
    stroke-width: 3px;
}
.thumb .thumb-green {
    font-size: 50px;
    fill: #1c6a50;
    stroke: #1c6a50;
    stroke-width: 2px;
}
.thumb .thumb-body text {
    text-anchor: start;
    font-size: 22px;
    fill: #e4e0f4;
}
.thumb .thumb-title {
    font-size: 40px;
    fill: #ffffff;
}
.thumb .thumb-bar {
    font-size: 21px;
    fill: #1b2360;
}
.gauge-numbers {
    font-family: "Liberation Mono", monospace;
    font-size: 9px;
}
.editor {
    flex: 1;
    display: flex;
    align-items: center;
    padding: 0 15px 2px 17px;
}
.slide {
    position: relative;
    width: 100%;
    aspect-ratio: 1002 / 565;
    border: 1px solid #bfbfbf;
}
.slide-back {
    position: absolute;
    width: 100%;
    height: 100%;
}
.slide-content {
    position: relative;
    width: 74%;
    padding: 78px 0 0 231px;
}
.slide-title {
    margin-bottom: 14px;
    color: #ffffff;
    font-size: 40px;
    line-height: 60px;
    white-space: nowrap;
}
.slide-title .thin {
    font-family: "Open Sans", sans-serif;
    font-weight: 300;
}
.bar-row {
    position: relative;
    display: flex;
    align-items: center;
    height: 106px;
    margin-bottom: 5px;
    color: #1b2360;
    font-weight: 700;
}
.bar-shape {
    position: absolute;
    width: 100%;
    height: 100%;
}
.bar-number, .bar-text {
    position: relative;
    text-align: center;
}
.bar-number {
    width: 120px;
    font-size: 17px;
}
.bar-text {
    flex: 1;
    margin-left: -60px;
    padding-bottom: 8px;
    font-size: 21px;
}
.paste-options {
    position: absolute;
    left: 75.6%;
    top: 45.4%;
    display: flex;
    align-items: center;
    gap: 3px;
    height: 29px;
    padding: 0 3px 0 4px;
    border: 1px solid #ababab;
    background-color: #ffffff;
    color: #444444;
    font-size: 15px;
}
.scrollbar {
    width: 20px;
    display: flex;
    flex-direction: column;
    padding: 2px 2px 30px 0;
}
.scroll-button {
    width: 18px;
    height: 19px;
    display: flex;
    align-items: center;
    justify-content: center;
    background-color: #ffffff;
    border: 1px solid #bdbdbd;
}
.scroll-button .up, .scroll-button .down {
    border-left-width: 5px;
    border-right-width: 5px;
}
.scroll-button .up {
    border-bottom-width: 5px;
}
.scroll-button .down {
    border-top-width: 5px;
}
.track {
    flex: 1;
    display: flex;
    flex-direction: column;
    justify-content: flex-end;
    background-color: #dadada;
}
.scroll-thumb {
    height: 33%;
    background-color: #ffffff;
    border: 1px solid #ababab;
}
.page-button {
    height: 18px;
    display: flex;
    align-items: flex-end;
    justify-content: center;
}
.page-button + .page-button {
    height: 20px;
}

/* Status bar */
.status {
    display: flex;
    align-items: center;
    height: 28px;
    margin-top: 2px;
    padding: 0 22px 2px 10px;
    background-color: #f3f3f3;
    border-top: 1px solid #c6c6c6;
    white-space: nowrap;
}
.spell {
    margin: 0 auto 0 22px;
}
.note, .comment {
    display: flex;
    align-items: center;
    gap: 6px;
    margin-right: 25px;
}
.comment {
    gap: 4px;
}
.views {
    display: flex;
    align-self: stretch;
    margin: 0 6px -2px 0;
}
.views button {
    width: 50px;
    display: flex;
    align-items: center;
    justify-content: center;
}
.views .active {
    background-color: #c6c6c6;
}
.zoom {
    appearance: none;
    width: 125px;
    height: 14px;
    margin: 0 6px;
    background: linear-gradient(#a6a6a6, #a6a6a6) center / 100% 1px no-repeat, linear-gradient(#a6a6a6, #a6a6a6) center / 1px 7px no-repeat;
}
.zoom::-webkit-slider-thumb {
    appearance: none;
    width: 6px;
    height: 14px;
    background-color: #666666;
}
.percent {
    margin: 0 17px 0 15px;
    font-size: 15px;
}
```
